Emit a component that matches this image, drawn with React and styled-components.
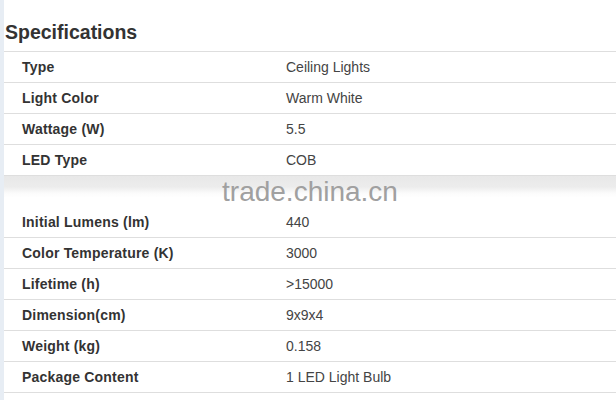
import React from 'react';
import styled, { createGlobalStyle } from 'styled-components';

const GlobalStyle = createGlobalStyle`
  html, body {
    margin: 0;
    padding: 0;
    background: #fff;
  }
  body {
    font-family: 'Liberation Sans', Arial, sans-serif;
    color: #333;
  }
`;

const Page = styled.div`
  position: relative;
  min-height: 400px;
  border-left: 4px solid #e7edf4;
  overflow: hidden;
`;

const Title = styled.h2`
  margin: 0;
  padding: 21px 0 8px 1px;
  font-size: 19.5px;
  line-height: 22px;
  font-weight: bold;
  color: #333;
`;

const Table = styled.div`
  border-top: ${({ $top }) => ($top ? '1px solid #dedede' : 'none')};
`;

const Row = styled.div`
  display: grid;
  grid-template-columns: 282px 1fr;
  height: 30px;
  align-items: center;
  border-bottom: 1px solid #dedede;
  font-size: 14px;
`;

const Label = styled.span`
  padding-left: 18px;
  font-weight: bold;
  letter-spacing: 0.2px;
  color: #333;
`;

const Value = styled.span`
  color: #444;
`;

const Band = styled.div`
  height: 31px;
  background: linear-gradient(#e8e8e8 0, #ececec 35%, #fbfbfb 55%, #fff 70%);
`;

const Watermark = styled.div`
  position: absolute;
  left: 0;
  right: 0;
  top: 174px;
  text-align: center;
  font-size: 28px;
  line-height: 36px;
  color: #a0a0a0;
  pointer-events: none;
`;

const first = [
  ['Type', 'Ceiling Lights'],
  ['Light Color', 'Warm White'],
  ['Wattage (W)', '5.5'],
  ['LED Type', 'COB'],
];

const second = [
  ['Initial Lumens (lm)', '440'],
  ['Color Temperature (K)', '3000'],
  ['Lifetime (h)', '>15000'],
  ['Dimension(cm)', '9x9x4'],
  ['Weight (kg)', '0.158'],
  ['Package Content', '1 LED Light Bulb'],
];

const SpecRows = ({ rows }) =>
  rows.map(([label, value]) => (
    <Row key={label}>
      <Label>{label}</Label>
      <Value>{value}</Value>
    </Row>
  ));

export default function App() {
  return (
    <>
      <GlobalStyle />
      <Page>
        <Title>Specifications</Title>
        <Table $top>
          <SpecRows rows={first} />
        </Table>
        <Band />
        <Table>
          <SpecRows rows={second} />
        </Table>
        <Watermark>trade.china.cn</Watermark>
      </Page>
    </>
  );
}
